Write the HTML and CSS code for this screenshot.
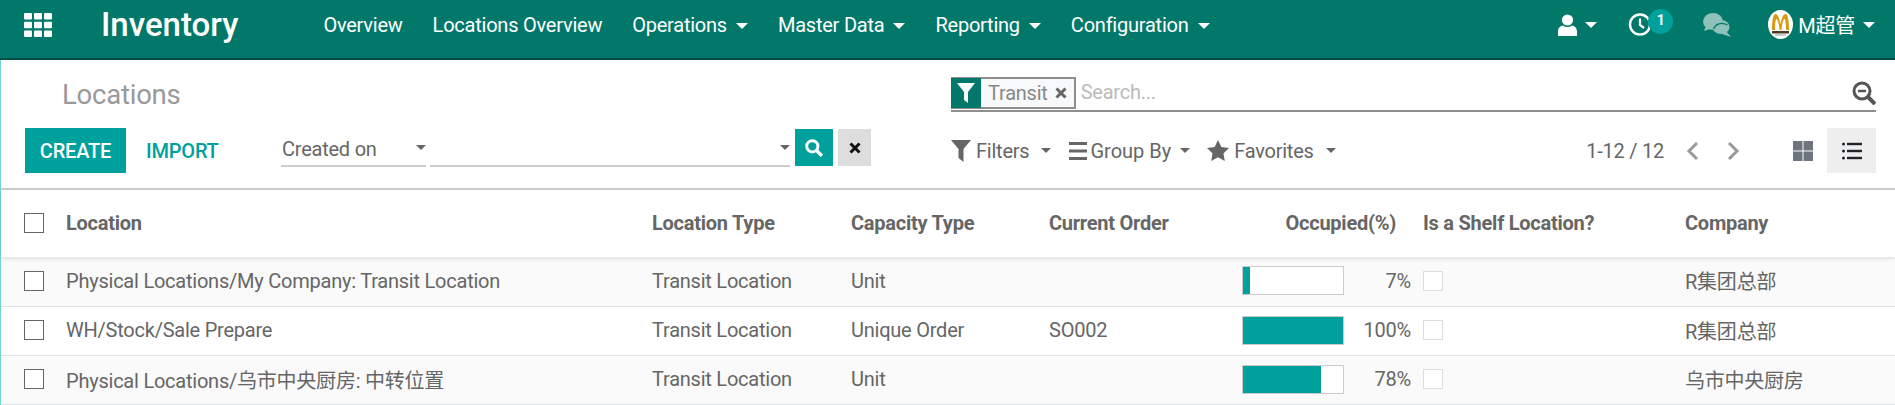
FILE: index.html
```html
<!DOCTYPE html>
<html lang="en">
<head>
  <meta charset="UTF-8">
  <meta name="viewport" content="width=device-width, initial-scale=1.0">
  <title>Locations - Inventory</title>
  <link rel="stylesheet" href="styles.css">
</head>
<body>
  <header class="navbar">
    <svg class="apps-icon" viewBox="0 0 28 24"><g fill="#fff"><rect width="8" height="6.6" rx="1"/><rect x="10" width="8" height="6.6" rx="1"/><rect x="20" width="8" height="6.6" rx="1"/><rect y="8.7" width="8" height="6.6" rx="1"/><rect x="10" y="8.7" width="8" height="6.6" rx="1"/><rect x="20" y="8.7" width="8" height="6.6" rx="1"/><rect y="17.4" width="8" height="6.6" rx="1"/><rect x="10" y="17.4" width="8" height="6.6" rx="1"/><rect x="20" y="17.4" width="8" height="6.6" rx="1"/></g></svg>
    <a class="brand">Inventory</a>
    <nav class="menu">
      <a>Overview</a>
      <a>Locations Overview</a>
      <a class="caret">Operations</a>
      <a class="caret">Master Data</a>
      <a class="caret">Reporting</a>
      <a class="caret">Configuration</a>
    </nav>
    <div class="systray">
      <div class="tray-item tray-user caret">
        <svg width="19" height="22" viewBox="0 0 19 22"><circle cx="9.5" cy="6" r="5.6" fill="#fff"/><path d="M0 22v-4.5C0 14 2.6 12 5 11.6c1.300 1 2.800 1.500 4.500 1.500s3.200-.5 4.500-1.500c2.400.4 5 2.400 5 5.900V22z" fill="#fff"/></svg>
      </div>
      <div class="tray-item tray-clock">
        <svg width="23" height="25" viewBox="0 0 23 25"><circle cx="12" cy="12.500" r="10" fill="none" stroke="#fff" stroke-width="2.400"/><path d="M12 6.500v6.500l4 3" fill="none" stroke="#fff" stroke-width="2.200"/></svg>
        <span class="badge">1</span>
      </div>
      <div class="tray-item tray-chat">
        <svg width="28" height="24" viewBox="0 0 28 24"><g fill="#8dc1b9"><ellipse cx="10" cy="8.500" rx="10" ry="8.500"/><path d="M3 13l-2 5 6-2z"/><ellipse cx="18" cy="14" rx="8.500" ry="7"/><path d="M23 18l5 6-9-3z"/></g><path d="M10.500 16c2-5 8-7.500 14-4" fill="none" stroke="#02786a" stroke-width="1.200"/></svg>
      </div>
      <div class="tray-item tray-account caret">
        <svg class="avatar" width="25" height="29" viewBox="0 0 25 29"><ellipse cx="12.500" cy="14.500" rx="12.500" ry="14.500" fill="#fff"/><path d="M4 20c0-9 1-16 3.500-16 2.500 0 4 5 5 10 1-5 2.500-10 5-10C20 4 21 11 21 20h-3c0-5-.5-11-1.500-11s-2.500 4-3 11h-2c-.5-7-2-11-3-11S7 15 7 20z" fill="#d99a12"/><rect x="4" y="21" width="17" height="2.500" fill="#4a3c22"/><rect x="7" y="24.500" width="11" height="1" fill="#999"/></svg>
        <span>M超管</span>
      </div>
    </div>
  </header>

  <main class="content">
    <section class="control-panel">
      <div class="title-row">
        <h2 class="page-title">Locations</h2>
        <div class="search-bar">
          <div class="facet">
            <span class="facet-icon">
              <svg width="18" height="20" viewBox="0 0 18 20"><path d="M0 0h18L11 9v11l-4-3V9z" fill="#fff"/></svg>
            </span>
            <span class="facet-label">Transit</span>
            <svg class="facet-remove" width="12" height="12" viewBox="0 0 12 12"><path d="M1.500 1.500l9 9M10.500 1.500l-9 9" stroke="#666" stroke-width="3"/></svg>
          </div>
          <span class="search-input">Search...</span>
          <svg class="search-minus" width="24" height="24" viewBox="0 0 24 24"><circle cx="10" cy="10" r="8" fill="none" stroke="#555" stroke-width="3"/><path d="M6 10h8" stroke="#555" stroke-width="2.500"/><path d="M16 16l7 7" stroke="#555" stroke-width="4"/></svg>
        </div>
      </div>
      <div class="tool-row">
        <div class="tool-left">
          <button class="btn-create">CREATE</button>
          <button class="btn-import">IMPORT</button>
          <div class="fake-select select-field">Created on</div>
          <div class="fake-select select-date"></div>
          <button class="btn-go">
            <svg width="18" height="18" viewBox="0 0 16 16"><circle cx="6.500" cy="6.500" r="5" fill="none" stroke="#fff" stroke-width="2.600"/><path d="M10.500 10.500l4.500 4.500" stroke="#fff" stroke-width="3"/></svg>
          </button>
          <button class="btn-clear">
            <svg width="12" height="12" viewBox="0 0 12 12"><path d="M1.500 1.500l9 9M10.500 1.500l-9 9" stroke="#111" stroke-width="3"/></svg>
          </button>
        </div>
        <div class="tool-right">
          <a class="search-opt caret-gray filters">
            <svg width="20" height="22" viewBox="0 0 20 22"><path d="M0 0h20l-7.500 9v13l-5-4V9z" fill="#666"/></svg>Filters
          </a>
          <a class="search-opt caret-gray groupby">
            <svg width="18" height="18" viewBox="0 0 18 18"><path d="M0 1.500h18M0 9h18M0 16.500h18" stroke="#666" stroke-width="3"/></svg>Group By
          </a>
          <a class="search-opt caret-gray favorites">
            <svg width="22" height="21" viewBox="0 0 21 20"><path d="M10.500 0l3.200 6.700 7.300 1-5.300 5.100 1.300 7.200-6.500-3.500L4 20l1.300-7.200L0 7.700l7.300-1z" fill="#666"/></svg>Favorites
          </a>
          <span class="pager-value">1-12 / 12</span>
          <svg class="pager-prev" width="13" height="20" viewBox="0 0 13 20"><path d="M11 2L3 10l8 8" fill="none" stroke="#999" stroke-width="3"/></svg>
          <svg class="pager-next" width="13" height="20" viewBox="0 0 13 20"><path d="M2 2l8 8-8 8" fill="none" stroke="#999" stroke-width="3"/></svg>
          <span class="view-kanban">
            <svg width="20" height="20" viewBox="0 0 20 20"><g fill="#6c757d"><rect width="9.500" height="9.500"/><rect x="10.500" width="9.500" height="9.500"/><rect y="10.500" width="9.500" height="9.500"/><rect x="10.500" y="10.500" width="9.500" height="9.500"/></g></svg>
          </span>
          <span class="view-list">
            <svg width="20" height="18" viewBox="0 0 20 18"><g fill="#212529"><circle cx="1.500" cy="2" r="1.500"/><circle cx="1.500" cy="9" r="1.500"/><circle cx="1.500" cy="16" r="1.500"/><rect x="5" y=".8" width="15" height="2.400"/><rect x="5" y="7.800" width="15" height="2.400"/><rect x="5" y="14.800" width="15" height="2.400"/></g></svg>
          </span>
        </div>
      </div>
    </section>

    <table class="list-table">
      <colgroup>
        <col class="col-select">
        <col class="col-location">
        <col class="col-type">
        <col class="col-capacity">
        <col class="col-order">
        <col class="col-occupied">
        <col class="col-shelf">
        <col class="col-company">
      </colgroup>
      <thead>
        <tr>
          <th><span class="check"></span></th>
          <th>Location</th>
          <th>Location Type</th>
          <th>Capacity Type</th>
          <th>Current Order</th>
          <th class="th-occupied">Occupied(%)</th>
          <th>Is a Shelf Location?</th>
          <th>Company</th>
        </tr>
      </thead>
      <tbody>
        <tr>
          <td><span class="check"></span></td>
          <td>Physical Locations/My Company: Transit Location</td>
          <td>Transit Location</td>
          <td>Unit</td>
          <td></td>
          <td><div class="occupied"><span class="bar"><span class="bar-fill" style="width: 7%"></span></span><span class="pct">7%</span></div></td>
          <td><span class="check check-off"></span></td>
          <td>R集团总部</td>
        </tr>
        <tr>
          <td><span class="check"></span></td>
          <td>WH/Stock/Sale Prepare</td>
          <td>Transit Location</td>
          <td>Unique Order</td>
          <td>SO002</td>
          <td><div class="occupied"><span class="bar"><span class="bar-fill" style="width: 100%"></span></span><span class="pct">100%</span></div></td>
          <td><span class="check check-off"></span></td>
          <td>R集团总部</td>
        </tr>
        <tr>
          <td><span class="check"></span></td>
          <td>Physical Locations/乌市中央厨房: 中转位置</td>
          <td>Transit Location</td>
          <td>Unit</td>
          <td></td>
          <td><div class="occupied"><span class="bar"><span class="bar-fill" style="width: 78%"></span></span><span class="pct">78%</span></div></td>
          <td><span class="check check-off"></span></td>
          <td>乌市中央厨房</td>
        </tr>
      </tbody>
    </table>
  </main>
</body>
</html>
```

FILE: styles.css
```css
* {
  box-sizing: border-box;
}

html, body {
  height: 405px;
  overflow: hidden;
}

body {
  margin: 0;
  background: #fff;
  color: #666;
  font-family: Roboto, "Noto Sans CJK SC", sans-serif;
  font-size: 20px;
  letter-spacing: -0.23px;
}

/* top bar */
.navbar {
  display: flex;
  align-items: center;
  height: 60px;
  padding: 0 20px 9px 24px;
  background: #02786a;
  border-bottom: 2px solid #014c43;
  color: #fff;
}

.apps-icon {
  width: 28px;
  height: 24px;
}

.brand {
  margin-left: 49px;
  font-size: 33px;
  font-weight: 500;
  letter-spacing: 0;
}

.menu {
  display: flex;
  gap: 30px;
  margin-left: 85px;
}

.caret::after,
.caret-gray::after {
  content: "";
  display: inline-block;
  margin-left: 10px;
  border-top: 6px solid #fff;
  border-left: 6px solid transparent;
  border-right: 6px solid transparent;
  vertical-align: middle;
}

.menu .caret::after {
  margin-left: 9px;
}

.caret-gray::after {
  border-top-color: #666;
}

.systray {
  display: flex;
  align-items: center;
  margin-left: auto;
}

.tray-item {
  display: flex;
  align-items: center;
}

.tray-user::after {
  margin-left: 8px;
}

.tray-clock {
  margin-left: 31px;
  position: relative;
}

.badge {
  position: absolute;
  left: 20px;
  top: -3px;
  width: 25px;
  height: 25px;
  border-radius: 50%;
  background: #00a09d;
  font-size: 14px;
  font-weight: 700;
  line-height: 23px;
  text-align: center;
}

.tray-chat {
  margin-left: 52px;
}

.tray-account {
  margin-left: 37px;
}

.tray-account::after {
  margin-left: 8px;
}

.tray-account span {
  margin-left: 5px;
}

/* control panel */
.content {
  border-left: 1px solid #6fd6d0;
}

.control-panel {
  height: 130px;
  padding: 0 19px 0 24px;
  border-bottom: 2px solid #ccc;
}

.title-row {
  display: flex;
  height: 52px;
  padding-top: 17px;
}

.page-title {
  width: 926px;
  margin: 0;
  padding: 1px 0 0 37px;
  color: #999;
  font-size: 27.500px;
  font-weight: 400;
}

.search-bar {
  display: flex;
  flex: 1;
  align-items: flex-start;
  height: 35px;
  border-bottom: 2px solid #8f8f8f;
}

.facet {
  display: flex;
  align-items: center;
  height: 32px;
  background: #f7f9fa;
  border: 2px solid #8f8f8f;
  border-left: 0;
}

.facet-icon {
  display: flex;
  align-items: center;
  justify-content: center;
  width: 30px;
  height: 30px;
  background: #02786a;
}

.facet-label {
  margin-left: 7px;
  color: #888;
}

.facet-remove {
  margin: 0 7px 0 7px;
}

.search-input {
  margin-left: 5px;
  color: #bbb;
  line-height: 30px;
}

.search-minus {
  margin: 4px 0 0 auto;
}

.tool-row {
  display: flex;
  margin-top: 16px;
}

.tool-left {
  display: flex;
  align-items: flex-start;
  width: 926px;
}

.btn-create {
  width: 101px;
  height: 45px;
  padding: 0;
  border: 0;
  background: #00a09d;
  color: #fff;
  font: 500 20px Roboto, sans-serif;
  letter-spacing: -0.2px;
}

.btn-import {
  width: 71px;
  height: 45px;
  margin-left: 20px;
  padding: 0;
  border: 0;
  background: none;
  color: #00a09d;
  font: 500 20px Roboto, sans-serif;
  letter-spacing: -0.2px;
}

.fake-select {
  position: relative;
  height: 39px;
  border-bottom: 2px solid #ccc;
  color: #666;
  line-height: 43px;
}

.fake-select::after {
  content: "";
  position: absolute;
  right: 0;
  top: 17px;
  border-top: 5px solid #666;
  border-left: 5px solid transparent;
  border-right: 5px solid transparent;
}

.select-field {
  width: 145px;
  margin-left: 64px;
  padding-left: 1px;
}

.select-date {
  width: 360px;
  margin-left: 4px;
}

.btn-go {
  display: flex;
  align-items: center;
  justify-content: center;
  width: 38px;
  height: 37px;
  margin: 1px 0 0 5px;
  padding: 0;
  border: 0;
  background: #00a09d;
}

.btn-clear {
  display: flex;
  align-items: center;
  justify-content: center;
  width: 33px;
  height: 37px;
  margin: 1px 0 0 5px;
  padding: 0;
  border: 0;
  background: #ddd;
}

.tool-right {
  display: flex;
  flex: 1;
  align-items: center;
  height: 45px;
}

.search-opt {
  display: flex;
  align-items: center;
  gap: 5px;
}

.search-opt::after {
  margin-left: 5px;
  border-top-width: 5px;
  border-left-width: 5px;
  border-right-width: 5px;
}

.filters::after {
  margin-left: 7px;
}

.groupby {
  gap: 3px;
  margin-left: 18px;
  letter-spacing: 0;
}

.groupby::after {
  margin-left: 6px;
}

.favorites {
  margin-left: 17px;
}

.favorites::after {
  margin-left: 7px;
}

.pager-value {
  margin-left: auto;
}

.pager-prev {
  margin-left: 22px;
}

.pager-next {
  margin-left: 28px;
}

.view-kanban {
  display: flex;
  margin-left: 53px;
}

.view-list {
  display: flex;
  align-items: center;
  justify-content: center;
  width: 49px;
  height: 45px;
  margin-left: 14px;
  background: #eee;
}

/* list */
.list-table {
  width: 1894px;
  border-collapse: collapse;
  table-layout: fixed;
}

.col-select { width: 65px; }
.col-location { width: 586px; }
.col-type { width: 199px; }
.col-capacity { width: 198px; }
.col-order { width: 193px; }
.col-occupied { width: 181px; }
.col-shelf { width: 262px; }
.col-company { width: 210px; }

th {
  height: 67px;
  padding: 0 0 2px;
  color: #666;
  font-size: 20px;
  font-weight: 700;
  letter-spacing: -0.25px;
  text-align: left;
}

th:first-child,
td:first-child {
  padding-left: 23px;
}

.th-occupied {
  padding-right: 27px;
  text-align: right;
}

thead tr {
  box-shadow: 0 2px 4px rgba(0, 0, 0, 0.1);
  position: relative;
}

td {
  height: 49px;
  padding: 0 0 1px;
  border-bottom: 1px solid #dee2e6;
  color: #666;
  white-space: nowrap;
}

tbody tr:nth-child(odd) {
  background: #fafafa;
}

.check {
  display: block;
  width: 20px;
  height: 20px;
  background: #fff;
  border: 1px solid #666;
}

.check-off {
  border-color: #ddd;
}

.occupied {
  display: flex;
  align-items: center;
  padding-right: 12px;
}

.bar {
  display: block;
  width: 102px;
  height: 29px;
  background: #fff;
  border: 1px solid #ccc;
}

.bar-fill {
  display: block;
  height: 100%;
  background: #00a09d;
}

.pct {
  margin-left: auto;
}
```
